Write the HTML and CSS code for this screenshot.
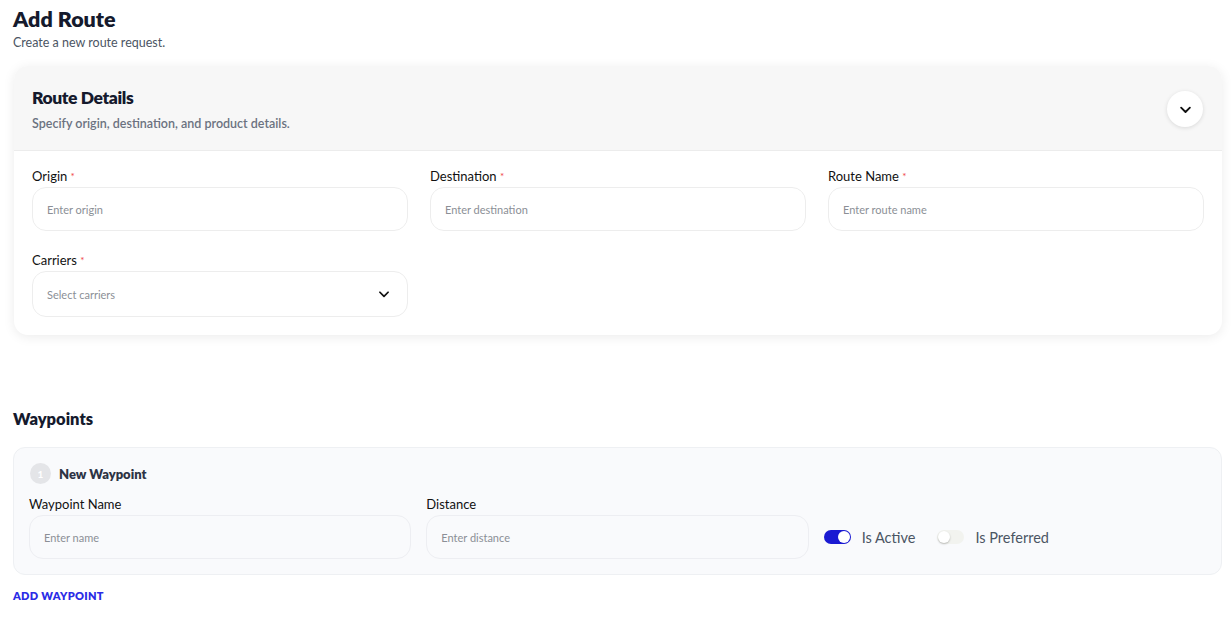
FILE: index.html
```html
<!DOCTYPE html>
<html lang="en">
<head>
  <meta charset="UTF-8">
  <title>Add Route</title>
  <link rel="stylesheet" href="styles.css">
</head>
<body>
<div class="page">
  <div class="page-head">
    <h1>Add Route</h1>
    <p>Create a new route request.</p>
  </div>

  <div class="card">
    <div class="card-head">
      <div>
        <h2>Route Details</h2>
        <p>Specify origin, destination, and product details.</p>
      </div>
      <button class="round-btn">
        <svg width="15" height="15" viewBox="0 0 24 24" fill="none" stroke="#111" stroke-width="3" stroke-linecap="round" stroke-linejoin="round"><path d="M5 9l7 7 7-7"/></svg>
      </button>
    </div>
    <div class="card-body">
      <div class="field">
        <label>Origin <span class="req">*</span></label>
        <div class="input">Enter origin</div>
      </div>
      <div class="field">
        <label>Destination <span class="req">*</span></label>
        <div class="input">Enter destination</div>
      </div>
      <div class="field">
        <label>Route Name <span class="req">*</span></label>
        <div class="input">Enter route name</div>
      </div>
      <div class="field">
        <label>Carriers <span class="req">*</span></label>
        <div class="input select">
          Select carriers
          <svg width="14" height="14" viewBox="0 0 24 24" fill="none" stroke="#111" stroke-width="3" stroke-linecap="round" stroke-linejoin="round"><path d="M5 9l7 7 7-7"/></svg>
        </div>
      </div>
    </div>
  </div>

  <h3 class="section-title">Waypoints</h3>
  <div class="wp-card">
    <div class="wp-head">
      <span class="step">1</span>
      <span class="wp-title">New Waypoint</span>
    </div>
    <div class="wp-grid">
      <div class="field">
        <label>Waypoint Name</label>
        <div class="input soft">Enter name</div>
      </div>
      <div class="field">
        <label>Distance</label>
        <div class="input soft">Enter distance</div>
      </div>
      <div class="toggles">
        <span class="toggle on"><span class="knob"></span></span>
        <span class="toggle-label">Is Active</span>
        <span class="toggle"><span class="knob"></span></span>
        <span class="toggle-label">Is Preferred</span>
      </div>
    </div>
  </div>
  <a class="add-link" href="#">ADD WAYPOINT</a>
</div>
</body>
</html>
```

FILE: styles.css
```css
body {
  margin: 0;
  font-family: "Lato", "Noto Sans", sans-serif;
  color: #111827;
  background: #fff;
}
.page {
  padding: 6px 10px 0 13px;
}
.page-head h1 {
  margin: 0;
  font-size: 21.5px;
  line-height: 26px;
  font-weight: 800;
  color: #151a2d;
}
.page-head p {
  margin: 3px 0 0;
  font-size: 12.5px;
  color: #4b5563;
}
.card {
  margin: 16px 0 0 1px;
  border-radius: 14px;
  background: #fff;
  box-shadow: 0 2px 12px rgba(0, 0, 0, 0.08);
  overflow: hidden;
}
.card-head {
  background: #f7f7f7;
  border-bottom: 1px solid #ececec;
  padding: 21px 18px 19px;
  display: flex;
  align-items: center;
  justify-content: space-between;
}
.card-head h2 {
  margin: 0;
  font-size: 17.5px;
  font-weight: 800;
  letter-spacing: -0.4px;
  color: #151a2d;
}
.card-head p {
  margin: 8px 0 0;
  font-size: 12.5px;
  color: #6b7280;
  font-weight: 600;
}
.round-btn {
  width: 36px;
  height: 36px;
  border: none;
  border-radius: 50%;
  background: #fff;
  box-shadow: 0 1px 4px rgba(0, 0, 0, 0.12);
  display: flex;
  align-items: center;
  justify-content: center;
  padding: 0;
  margin-right: 1px;
}
.card-body {
  padding: 17px 18px 18px;
  display: grid;
  grid-template-columns: repeat(3, 1fr);
  column-gap: 22px;
  row-gap: 21px;
}
.field label {
  display: block;
  font-size: 13px;
  line-height: 16px;
  color: #111;
  margin-bottom: 3px;
}
.req {
  color: #ef4444;
  font-size: 10px;
  vertical-align: 1px;
}
.input {
  height: 44px;
  box-sizing: border-box;
  border: 1px solid #ededed;
  border-radius: 14px;
  padding: 0 14px;
  display: flex;
  align-items: center;
  font-size: 11px;
  color: #8b8f96;
  background: #fff;
}
.input.select {
  height: 46px;
  justify-content: space-between;
  padding-right: 16px;
}
.input.soft {
  background: #f9fafc;
  border-color: #edeef2;
}
.section-title {
  margin: 74px 0 0;
  font-size: 16.5px;
  font-weight: 800;
  color: #151a2d;
}
.wp-card {
  margin-top: 18px;
  border: 1px solid #eef0f3;
  background: #f9fafc;
  border-radius: 12px;
  padding: 15px 15px 15px;
}
.wp-head {
  display: flex;
  align-items: center;
  gap: 8px;
}
.step {
  width: 21px;
  height: 21px;
  border-radius: 50%;
  background: #e4e5e8;
  color: #fff;
  font-size: 10px;
  font-weight: 700;
  display: flex;
  align-items: center;
  justify-content: center;
  margin-left: 1px;
}
.wp-title {
  font-size: 13px;
  font-weight: 800;
  color: #2d3344;
}
.wp-grid {
  margin-top: 12px;
  display: grid;
  grid-template-columns: repeat(3, 1fr);
  column-gap: 15px;
  align-items: end;
}
.wp-grid .field label {
  margin-bottom: 3px;
}
.toggles {
  height: 44px;
  display: flex;
  align-items: center;
}
.toggle {
  width: 27px;
  height: 14px;
  border-radius: 7px;
  background: #f2f3ef;
  position: relative;
  display: inline-block;
}
.toggle .knob {
  position: absolute;
  top: 1px;
  left: 1px;
  width: 12px;
  height: 12px;
  border-radius: 50%;
  background: #fff;
  box-shadow: 0 1px 2px rgba(0, 0, 0, 0.25);
}
.toggle.on {
  background: #1a1ad2;
}
.toggle.on .knob {
  left: 14px;
  box-shadow: none;
}
.toggle-label {
  font-size: 14.5px;
  color: #4b5563;
  margin: 0 22px 0 11px;
}
.add-link {
  display: inline-block;
  margin-top: 14px;
  font-size: 11px;
  font-weight: 800;
  letter-spacing: 0.3px;
  color: #2b2be6;
  text-decoration: none;
}
```
